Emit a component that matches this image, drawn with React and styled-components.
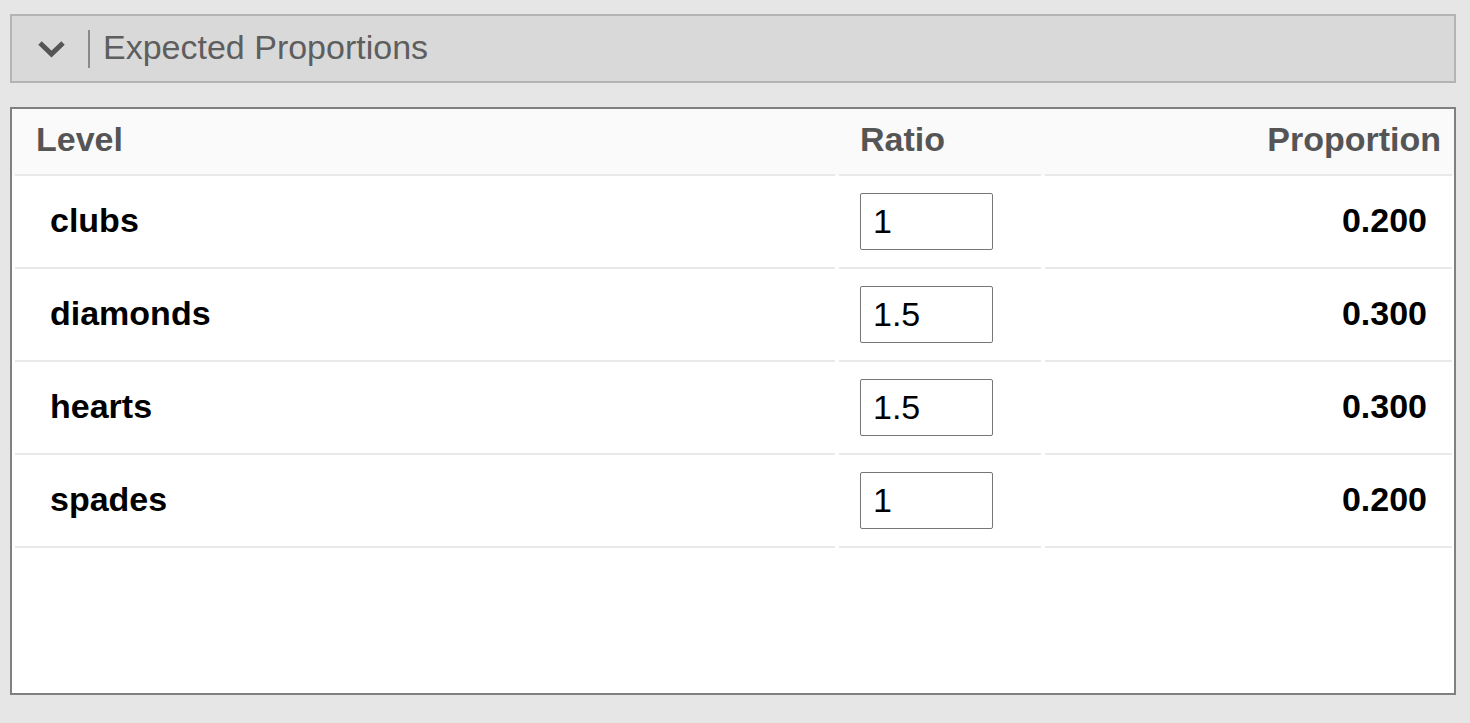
import styled, { createGlobalStyle } from "styled-components";

const GlobalStyle = createGlobalStyle`
  html, body {
    margin: 0;
    padding: 0;
    background: #e6e6e6;
  }
  body {
    font-family: "Liberation Sans", Arial, sans-serif;
  }
  * { box-sizing: border-box; }
`;

const Page = styled.div`
  padding: 14px 14px 0 10px;
  display: flex;
  flex-direction: column;
  gap: 24px;
`;

const SectionBar = styled.div`
  height: 69px;
  display: flex;
  align-items: center;
  padding-left: 24px;
  background: #d9d9d9;
  border: 2px solid #b4b4b4;
`;

const Toggle = styled.button`
  display: flex;
  align-items: center;
  justify-content: center;
  width: 31px;
  height: 22px;
  padding: 0;
  border: 0;
  background: none;
  color: #555;
  cursor: pointer;
`;

const Divider = styled.span`
  width: 2px;
  height: 38px;
  margin-left: 21px;
  background: #8a8a8a;
`;

const Title = styled.h2`
  margin: 0 0 0 13px;
  padding-bottom: 4px;
  font-size: 34px;
  font-weight: 400;
  color: #5e5e5e;
  line-height: 1;
`;

const Panel = styled.div`
  height: 588px;
  background: #fff;
  border: 2px solid #808080;
`;

const Row = styled.div`
  display: grid;
  grid-template-columns: 1fr 202px 407px;
  column-gap: 4px;
  padding: 0 2px 0 3px;
  background: ${(p) => (p.$head ? "#fafafa" : "#fff")};
`;

const Cell = styled.div`
  display: flex;
  align-items: center;
  height: ${(p) => (p.$head ? "67px" : "93px")};
  border-bottom: 2px solid #e9e9e9;
  justify-content: ${(p) => (p.$right ? "flex-end" : "flex-start")};
  padding: 0 ${(p) => p.$pr || 0}px ${(p) => p.$pb ?? (p.$head ? 4 : 2)}px
    ${(p) => p.$pl || 0}px;
  font-size: 34px;
  font-weight: 700;
  color: ${(p) => (p.$head ? "#555" : "#000")};
  white-space: nowrap;
`;

const RatioInput = styled.input`
  width: 133px;
  height: 57px;
  padding: 0 0 0 12px;
  border: 1px solid #767676;
  border-radius: 2px;
  font-family: "Liberation Sans", Arial, sans-serif;
  font-size: 34px;
  color: #000;
  background: #fff;
  outline: none;
`;

const levels = [
  { name: "clubs", ratio: "1" },
  { name: "diamonds", ratio: "1.5" },
  { name: "hearts", ratio: "1.5" },
  { name: "spades", ratio: "1" },
];

function Chevron() {
  return (
    <svg width="31" height="22" viewBox="0 0 31 22">
      <polyline
        points="4,5 15.5,16 27,5"
        fill="none"
        stroke="currentColor"
        strokeWidth="5"
        strokeLinejoin="miter"
      />
    </svg>
  );
}

export default function App() {
  const total = levels.reduce((s, l) => s + parseFloat(l.ratio), 0);

  return (
    <>
      <GlobalStyle />
      <Page>
        <SectionBar>
          <Toggle aria-label="collapse">
            <Chevron />
          </Toggle>
          <Divider />
          <Title>Expected Proportions</Title>
        </SectionBar>
        <Panel>
          <Row $head>
            <Cell $head $pl={21}>Level</Cell>
            <Cell $head $pl={21}>Ratio</Cell>
            <Cell $head $right $pr={11}>Proportion</Cell>
          </Row>
          {levels.map((l) => (
            <Row key={l.name}>
              <Cell $pl={35}>{l.name}</Cell>
              <Cell $pl={21} $pb={0}>
                <RatioInput defaultValue={l.ratio} />
              </Cell>
              <Cell $right $pr={25}>
                {(parseFloat(l.ratio) / total).toFixed(3)}
              </Cell>
            </Row>
          ))}
        </Panel>
      </Page>
    </>
  );
}
